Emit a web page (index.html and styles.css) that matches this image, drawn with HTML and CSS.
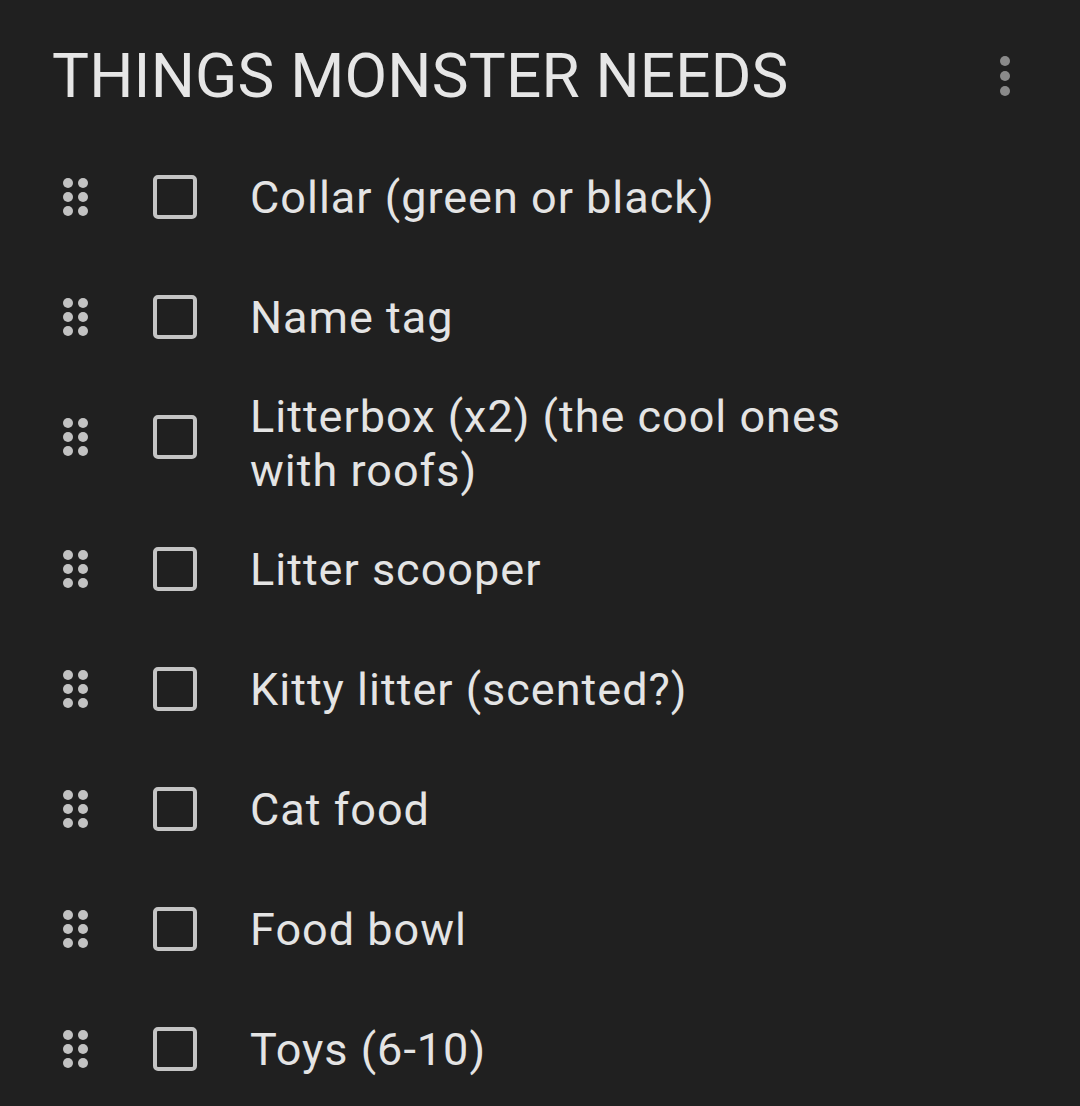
FILE: index.html
```html
<!DOCTYPE html>
<html>
<head>
<meta charset="utf-8">
<link rel="stylesheet" href="styles.css">
</head>
<body>
<div class="note">
  <div class="header">
    <h1 class="title">THINGS MONSTER NEEDS</h1>
    <div class="menu"><span></span><span></span><span></span></div>
  </div>
  <ul class="list">
    <li class="item"><div class="ctl"><div class="grip"><i></i><i></i><i></i><i></i><i></i><i></i></div><div class="box"></div></div><div class="text">Collar (green or black)</div></li>
    <li class="item"><div class="ctl"><div class="grip"><i></i><i></i><i></i><i></i><i></i><i></i></div><div class="box"></div></div><div class="text">Name tag</div></li>
    <li class="item"><div class="ctl"><div class="grip"><i></i><i></i><i></i><i></i><i></i><i></i></div><div class="box"></div></div><div class="text">Litterbox (x2) (the cool ones with roofs)</div></li>
    <li class="item"><div class="ctl"><div class="grip"><i></i><i></i><i></i><i></i><i></i><i></i></div><div class="box"></div></div><div class="text">Litter scooper</div></li>
    <li class="item"><div class="ctl"><div class="grip"><i></i><i></i><i></i><i></i><i></i><i></i></div><div class="box"></div></div><div class="text">Kitty litter (scented?)</div></li>
    <li class="item"><div class="ctl"><div class="grip"><i></i><i></i><i></i><i></i><i></i><i></i></div><div class="box"></div></div><div class="text">Cat food</div></li>
    <li class="item"><div class="ctl"><div class="grip"><i></i><i></i><i></i><i></i><i></i><i></i></div><div class="box"></div></div><div class="text">Food bowl</div></li>
    <li class="item"><div class="ctl"><div class="grip"><i></i><i></i><i></i><i></i><i></i><i></i></div><div class="box"></div></div><div class="text">Toys (6-10)</div></li>
  </ul>
</div>
</body>
</html>
```
FILE: styles.css
```css
html, body {
  margin: 0;
  padding: 0;
  background: #202020;
}
body {
  width: 1080px;
  height: 1106px;
  overflow: hidden;
  font-family: Roboto, "Open Sans", "Liberation Sans", sans-serif;
  color: #e4e4e4;
}
.note {
  padding: 36px 0 0 0;
}
.header {
  display: flex;
  align-items: center;
  justify-content: space-between;
  padding: 0 70px 0 52px;
}
.title {
  margin: 0;
  font-size: 62px;
  font-weight: 400;
  line-height: 80px;
  letter-spacing: 0.2px;
  color: #e6e6e6;
}
.menu {
  display: flex;
  flex-direction: column;
  gap: 5px;
  width: 10px;
}
.menu span {
  width: 10px;
  height: 10px;
  border-radius: 50%;
  background: #8a8a8a;
}
.list {
  list-style: none;
  margin: 22px 0 0 0;
  padding: 0;
}
.item {
  display: flex;
  align-items: center;
  min-height: 120px;
  box-sizing: border-box;
  padding: 12px 0;
}
.ctl {
  display: flex;
  align-items: center;
  align-self: flex-start;
  height: 94px;
}
.grip {
  display: grid;
  grid-template-columns: 10px 10px;
  gap: 4px 5px;
  margin-left: 63px;
  width: 25px;
}
.grip i {
  display: block;
  width: 10px;
  height: 10px;
  border-radius: 50%;
  background: #c2c2c2;
}
.box {
  width: 44px;
  height: 44px;
  box-sizing: border-box;
  border: 4px solid #c4c4c4;
  border-radius: 5px;
  margin-left: 65px;
  flex: none;
}
.text {
  margin-left: 53px;
  font-size: 45px;
  line-height: 54px;
  letter-spacing: 1px;
  width: 640px;
  color: #e4e4e4;
}
```
